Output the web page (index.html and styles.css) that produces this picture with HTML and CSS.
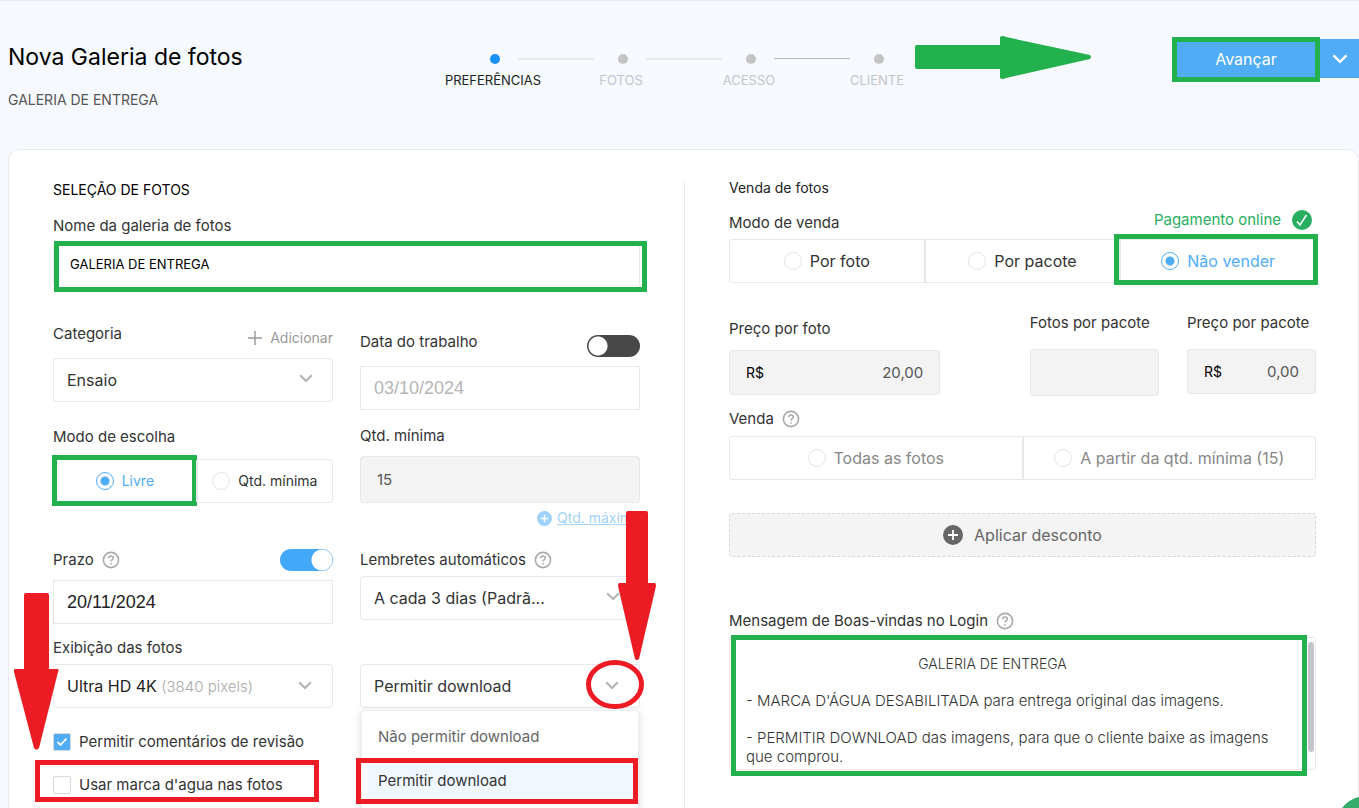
FILE: index.html
```html
<!DOCTYPE html>
<html lang="pt-BR">
<head>
<meta charset="utf-8">
<meta name="viewport" content="width=device-width, initial-scale=1">
<title>Nova Galeria de fotos</title>
<link rel="stylesheet" href="styles.css">
</head>
<body>
<svg class="sprite" aria-hidden="true">
  <symbol id="chevron" viewBox="0 0 14 9"><path d="M1.200 1.200 7 7l5.800-5.800" fill="none" stroke="currentColor" stroke-width="2.200"/></symbol>
  <symbol id="help" viewBox="0 0 18 18"><circle cx="9" cy="9" r="7.600" fill="none" stroke="currentColor" stroke-width="1.600"/><path d="M6.700 7.200c0-1.400 1-2.300 2.300-2.300s2.300.8 2.300 2.100c0 1.600-2.300 1.800-2.300 3.500" fill="none" stroke="currentColor" stroke-width="1.500"/><circle cx="9" cy="12.800" r=".9" fill="currentColor"/></symbol>
  <symbol id="plus-disc" viewBox="0 0 20 20"><circle cx="10" cy="10" r="10" fill="currentColor"/><path d="M10 5v10M5 10h10" stroke="#fff" stroke-width="1.800"/></symbol>
</svg>

<header class="topbar">
  <div class="titles">
    <h1 class="title">Nova Galeria de fotos</h1>
    <p class="subtitle">GALERIA DE ENTREGA</p>
  </div>
  <ol class="steps">
    <li class="step step-active">PREFERÊNCIAS</li>
    <li class="step">FOTOS</li>
    <li class="step step-thin">ACESSO</li>
    <li class="step">CLIENTE</li>
  </ol>
  <div class="actions">
    <svg class="arrow-go" viewBox="0 0 176 43" aria-hidden="true"><path d="M2 9h83V1q2-2 6 0l84 18q2 2 0 4L91 42q-4 2-6 0V33H2q-2 0-2-2V11q0-2 2-2z" fill="#22b14c"/></svg>
    <button class="btn-next mark-go" type="button">Avançar</button>
    <button class="btn-more" type="button" aria-label="Mais opções"><svg class="chevron chevron-lg"><use href="#chevron"/></svg></button>
  </div>
</header>

<main class="panel">
  <section class="selection">
    <h2 class="heading">SELEÇÃO DE FOTOS</h2>
    <label class="label label-name" for="name">Nome da galeria de fotos</label>
    <div class="name-box"><input class="control input-name" id="name" type="text" value="GALERIA DE ENTREGA"></div>

    <div class="columns">
      <div class="column">
        <div class="row row-category">
          <label class="label" for="category">Categoria</label>
          <button class="btn-add" type="button"><svg class="icon-plus" viewBox="0 0 14 14"><path d="M7 0v14M0 7h14" stroke="currentColor" stroke-width="1.400"/></svg>Adicionar</button>
        </div>
        <div class="select-box">
          <select class="control select" id="category"><option>Ensaio</option></select>
          <svg class="chevron"><use href="#chevron"/></svg>
        </div>

        <p class="label label-choice" id="choice">Modo de escolha</p>
        <div class="options options-choice" role="radiogroup" aria-labelledby="choice">
          <label class="option option-on mark-free"><input class="radio" type="radio" name="choice" checked>Livre</label>
          <label class="option"><input class="radio" type="radio" name="choice">Qtd. mínima</label>
        </div>

        <div class="row row-deadline">
          <label class="label" for="deadline">Prazo</label><svg class="help"><use href="#help"/></svg>
          <input class="switch" type="checkbox" role="switch" aria-label="Ativar prazo" checked>
        </div>
        <input class="control date" id="deadline" type="text" value="20/11/2024">

        <div class="display-field">
          <svg class="arrow-down arrow-watermark" viewBox="0 0 45 157" aria-hidden="true"><path d="M12 0h21q2 0 2 2v74h9q1 1 0 3L25 155q-2.500 3-5 0L0 79q-1-2 1-3h9V2q0-2 2-2z" fill="#ed1c24"/></svg>
          <p class="label" id="display">Exibição das fotos</p>
          <button class="control dropdown" type="button" aria-haspopup="listbox" aria-labelledby="display"><span class="strong">Ultra HD 4K</span> <span class="muted">(3840 pixels)</span><svg class="chevron"><use href="#chevron"/></svg></button>
        </div>

        <div class="checks">
          <label class="check"><input class="checkbox" type="checkbox" checked>Permitir comentários de revisão</label>
          <label class="check mark-watermark"><input class="checkbox" type="checkbox">Usar marca d'agua nas fotos</label>
        </div>
      </div>

      <div class="column column-b">
        <div class="row row-date">
          <label class="label" for="date">Data do trabalho</label>
          <input class="switch" type="checkbox" role="switch" aria-label="Ativar data do trabalho">
        </div>
        <input class="control date date-off" id="date" type="text" value="03/10/2024">

        <label class="label label-min" for="min">Qtd. mínima</label>
        <input class="control filled input-min" id="min" type="text" value="15">
        <div class="max"><svg class="icon-max"><use href="#plus-disc"/></svg><a class="link-max" href="#">Qtd. máxima</a></div>

        <div class="row row-reminder"><label class="label" for="reminder">Lembretes automáticos</label><svg class="help"><use href="#help"/></svg></div>
        <div class="select-box">
          <select class="control select" id="reminder"><option>A cada 3 dias (Padrã...</option></select>
          <svg class="chevron"><use href="#chevron"/></svg>
        </div>

        <div class="download">
          <button class="control dropdown" type="button" aria-haspopup="listbox" aria-expanded="true">Permitir download<svg class="chevron"><use href="#chevron"/></svg></button>
          <ul class="menu" role="listbox" aria-label="Download">
            <li class="menu-item" role="option">Não permitir download</li>
            <li class="menu-item menu-item-on" role="option" aria-selected="true">Permitir download</li>
          </ul>
          <svg class="arrow-down arrow-download" viewBox="0 0 38 149" aria-hidden="true"><path d="M10 0h18q2 0 2 2v70h7q1 1 1 3L21 148q-2 2-4 0L0 75q0-2 1-3h7V2q0-2 2-2z" fill="#ed1c24"/></svg>
          <svg class="ring" viewBox="0 0 58 49" aria-hidden="true"><ellipse cx="29" cy="24.500" rx="26.500" ry="22" fill="none" stroke="#ed1c24" stroke-width="5"/></svg>
        </div>
      </div>
    </div>
  </section>

  <section class="sale">
    <h2 class="heading heading-sale">Venda de fotos</h2>
    <div class="row row-mode">
      <p class="label" id="mode">Modo de venda</p>
      <p class="online">Pagamento online<svg class="icon-ok" viewBox="0 0 20 20"><circle cx="10" cy="10" r="10" fill="#27ae60"/><path d="m5 11.500 3 3.500L14.500 5" fill="none" stroke="#fff" stroke-width="1.500"/></svg></p>
    </div>
    <div class="options options-lg" role="radiogroup" aria-labelledby="mode">
      <label class="option"><input class="radio" type="radio" name="mode">Por foto</label>
      <label class="option"><input class="radio" type="radio" name="mode">Por pacote</label>
      <label class="option option-on mark-nosale"><input class="radio" type="radio" name="mode" checked>Não vender</label>
    </div>

    <div class="prices">
      <div class="price price-photo">
        <label class="label" for="price">Preço por foto</label>
        <div class="control filled money"><span class="currency">R$</span><input class="amount" id="price" type="text" value="20,00"></div>
      </div>
      <div class="price">
        <label class="label" for="count">Fotos por pacote</label>
        <input class="control filled" id="count" type="text">
      </div>
      <div class="price">
        <label class="label" for="pack">Preço por pacote</label>
        <div class="control filled money"><span class="currency">R$</span><input class="amount" id="pack" type="text" value="0,00"></div>
      </div>
    </div>

    <div class="row row-sell"><p class="label" id="sell">Venda</p><svg class="help"><use href="#help"/></svg></div>
    <div class="options options-lg options-off" role="radiogroup" aria-labelledby="sell">
      <label class="option"><input class="radio" type="radio" name="sell">Todas as fotos</label>
      <label class="option"><input class="radio" type="radio" name="sell">A partir da qtd. mínima (15)</label>
    </div>

    <button class="btn-discount" type="button"><svg class="icon-disc"><use href="#plus-disc"/></svg>Aplicar desconto</button>

    <div class="row row-message"><p class="label" id="message">Mensagem de Boas-vindas no Login</p><svg class="help"><use href="#help"/></svg></div>
    <div class="message-box">
      <div class="message" role="textbox" aria-multiline="true" aria-labelledby="message" contenteditable="true" spellcheck="false">
        <p class="message-title">GALERIA DE ENTREGA</p>
        <p class="message-line">- MARCA D'ÁGUA DESABILITADA para entrega original das imagens.</p>
        <p class="message-line">- PERMITIR DOWNLOAD das imagens, para que o cliente baixe as imagens que comprou.</p>
      </div>
      <span class="thumb"></span>
    </div>
  </section>
</main>
<button class="chat" type="button" aria-label="Abrir conversa"></button>
</body>
</html>
```
FILE: styles.css
```css
* { box-sizing: border-box; }

body {
  margin: 0;
  height: 100vh;
  overflow: hidden;
  background: #f6f9fe;
  color: #333;
  font: 400 15px/20px Inter, "Open Sans", sans-serif;
}

h1, h2, p, ol, ul { margin: 0; padding: 0; }
ol, ul { list-style: none; }
button, input, select { font: inherit; color: inherit; }
button { cursor: pointer; }
.sprite { position: absolute; width: 0; height: 0; }

/* Top bar */
.topbar {
  display: flex;
  align-items: flex-start;
  height: 149px;
  padding-left: 8px;
  border-top: 1px solid #e9ecf1;
}
.titles { width: 421px; padding-top: 42px; }
.title { color: #000; font-size: 23px; font-weight: 400; line-height: 28px; }
.subtitle { margin-top: 19px; color: #555; font-size: 14px; }

.steps { display: grid; grid-template-columns: repeat(4, 128px); padding-top: 53px; }
.step {
  position: relative;
  color: #c4c6c9;
  font-size: 13px;
  text-align: center;
}
.step::before {
  content: "";
  display: block;
  width: 10px;
  height: 10px;
  margin: 0 0 6px calc(50% - 3px);
  border-radius: 50%;
  background: #c4c4c4;
}
.step:not(:last-child)::after {
  content: "";
  position: absolute;
  top: 4px;
  left: calc(50% + 25px);
  width: 76px;
  height: 2px;
  background: #e8e8e8;
}
.step.step-thin:not(:last-child)::after { height: 1px; background: #b8b8b8; }
.step.step-active { color: #222; }
.step-active::before { background: #1890ff; }

.actions { position: relative; display: flex; height: 39px; margin: 38px 0 0 auto; }
.arrow-go { position: absolute; top: -3px; right: 268px; width: 176px; height: 43px; }
.btn-next, .btn-more { border: 0; padding: 0; background: #50adf5; color: #fff; }
.btn-next { position: relative; width: 148px; font-size: 16px; }
.btn-more { width: 39px; }

.mark-go::after, .name-box::after, .mark-free::after, .mark-nosale::after, .message-box::after {
  content: "";
  position: absolute;
  border: 5px solid #22b14c;
  pointer-events: none;
}
.mark-go::after { inset: -2px 0 -4px; }

/* Panel */
.panel {
  display: grid;
  grid-template-columns: 1fr 1fr;
  gap: 89px;
  position: relative;
  min-height: 700px;
  margin-left: 8px;
  padding: 0 42px 0 44px;
  border: 1px solid #e8eaed;
  border-radius: 12px;
  background: #fff;
}
.panel::before {
  content: "";
  position: absolute;
  top: 32px;
  bottom: 0;
  left: 50%;
  width: 1px;
  background: #e8e8e8;
}
.selection { padding-top: 30px; min-width: 0; }
.sale { padding-top: 28px; min-width: 0; }
.heading { color: #000; font-size: 14px; font-weight: 400; line-height: 20px; }
.heading-sale { color: #222; }
.label { display: block; white-space: nowrap; font-size: 15px; }
.row { display: flex; }

.control {
  display: block;
  width: 100%;
  height: 44px;
  padding: 0 13px;
  border: 1px solid #e8e8e8;
  border-radius: 3px;
  background: #fff;
  outline: 0;
}
.filled { height: 47px; background: #f3f3f3; color: #555; }

.label-name { margin: 16px 0 8px; }
.name-box { position: relative; }
.name-box::after { inset: -3px -7px -4px 1px; }
.input-name { padding: 0 16px 4px; color: #000; font-size: 13px; }

.columns { display: grid; grid-template-columns: 1fr 1fr; gap: 27px; margin-top: 36px; }
.column { min-width: 0; }
.column-b { padding-top: 8px; }

.row-category { justify-content: space-between; margin-bottom: 10px; }
.btn-add {
  display: flex;
  align-items: center;
  gap: 8px;
  height: 24px;
  padding: 4px 0 0;
  border: 0;
  background: none;
  color: #999;
  font-size: 14px;
}
.icon-plus { width: 14px; height: 14px; }

.select-box { position: relative; }
.select { appearance: none; padding-right: 40px; font-size: 16px; }
.dropdown { position: relative; padding-right: 40px; text-align: left; white-space: nowrap; font-size: 16px; }
.strong { color: #222; }
.muted { color: #aaa; font-size: 15px; font-weight: 300; }
.chevron { width: 14px; height: 9px; color: #b5b5b5; }
.select-box .chevron, .dropdown .chevron { position: absolute; top: 16px; right: 20px; pointer-events: none; }
.chevron.chevron-lg { width: 16px; height: 10px; color: #fff; }

.label-choice { margin: 25px 0 12px; }
.options { display: flex; border: 1px solid #e8e8e8; border-radius: 3px; }
.option {
  position: relative;
  display: flex;
  flex: 1;
  align-items: center;
  justify-content: center;
  gap: 8px;
  height: 42px;
  white-space: nowrap;
}
.option + .option { border-left: 2px solid #e8e8e8; }
.option-on { color: #50adf5; }
.options-choice { font-size: 14px; }
.options-choice .option-on { flex: 0 0 51%; }
.options-lg { font-size: 16px; }
.options-off { color: #888; }
.radio {
  appearance: none;
  width: 18px;
  height: 18px;
  margin: 0;
  border: 1px solid #e4e4e4;
  border-radius: 50%;
  background: #fff;
}
.radio:checked { border-color: #50adf5; background: radial-gradient(circle, #50adf5 4px, #fff 5px); }
.mark-free::after { inset: -5px -1px -4px -2px; }
.mark-nosale::after { inset: -6px -3px -3px -7px; }

.help { width: 18px; height: 18px; margin-left: 8px; color: #aaa; }
.switch {
  appearance: none;
  width: 53px;
  height: 22px;
  margin: 0 0 0 auto;
  border-radius: 11px;
  background: radial-gradient(circle at 11px 11px, #fff 9px, #484848 10px);
}
.switch:checked { background: radial-gradient(circle at 42px 11px, #fff 10px, #42a9fa 11px); }
.row-deadline { align-items: center; height: 22px; margin: 46px 0 9px; }
.date { border-radius: 0; color: #222; font: 400 18px/20px "Liberation Sans", Arial, sans-serif; }
.date-off { color: #b5b5b5; }

.display-field { position: relative; margin-top: 14px; }
.display-field .label { margin-bottom: 6px; }
.arrow-down { position: absolute; z-index: 2; pointer-events: none; }
.arrow-watermark { top: -45px; left: -39px; width: 45px; height: 157px; }

.checks { display: grid; gap: 23px; margin-top: 24px; }
.check { position: relative; display: flex; gap: 8px; font-size: 15px; white-space: nowrap; }
.checkbox {
  appearance: none;
  width: 18px;
  height: 18px;
  margin: 1px 0 0;
  border: 1px solid #d9d9d9;
  border-radius: 2px;
  background: #fff;
}
.checkbox:checked {
  background: #50adf5 url("data:image/svg+xml,%3Csvg xmlns='http://www.w3.org/2000/svg' viewBox='0 0 16 16'%3E%3Cpath d='m3.500 8 3 3 6-6.500' fill='none' stroke='white' stroke-width='1.800'/%3E%3C/svg%3E") center / 16px no-repeat;
}
.mark-watermark::after, .menu-item-on::after {
  content: "";
  position: absolute;
  border: 5px solid #ed1c24;
  pointer-events: none;
}
.mark-watermark::after { inset: -15px 14px -7px -18px; }

.row-date { justify-content: space-between; height: 25px; margin-bottom: 9px; }
.row-date .switch { align-self: flex-end; }
.label-min { margin: 16px 0 10px; }
.input-min { padding: 0 16px; }
.max { display: flex; align-items: center; justify-content: flex-end; gap: 5px; margin-top: 5px; color: #9fd2fa; }
.icon-max { width: 15px; height: 15px; }
.link-max { color: inherit; font-size: 14px; }
.row-reminder { align-items: center; margin: 22px 0 6px; }

.download { position: relative; margin-top: 44px; }
.menu {
  position: absolute;
  z-index: 1;
  top: 46px;
  left: 1px;
  right: 1px;
  padding: 4px 5px 12px;
  border: 1px solid #eee;
  border-radius: 3px;
  background: #fff;
  box-shadow: 0 2px 8px rgba(0, 0, 0, .15);
}
.menu-item { position: relative; padding: 12px 11px; color: #666; font-size: 15px; }
.menu-item-on { background: #f0f7ff; color: #333; }
.menu-item-on::after { inset: -1px -5px -1px -11px; }
.arrow-download { top: -153px; right: -16px; width: 38px; height: 149px; }
.ring { position: absolute; z-index: 2; top: -4px; right: -4px; width: 58px; height: 49px; pointer-events: none; }

/* Sale */
.row-mode { justify-content: space-between; margin: 12px 0 6px; }
.row-mode .label { padding-top: 3px; }
.online { display: flex; align-items: center; gap: 11px; height: 23px; padding: 0 4px 3px 0; color: #27ae60; }
.icon-ok { width: 20px; height: 20px; }

.prices { display: flex; gap: 28px; margin-top: 30px; }
.price { display: flex; flex-direction: column; gap: 16px; width: 22%; }
.price-photo { width: 36%; gap: 11px; margin-right: auto; padding-top: 6px; }
.money { display: flex; align-items: center; justify-content: space-between; height: 45px; padding: 0 16px; }
.currency { color: #000; font-size: 14px; }
.amount { width: 70%; padding: 0; border: 0; background: none; text-align: right; outline: 0; }

.row-sell { align-items: center; margin: 13px 0 7px; }
.btn-discount {
  display: flex;
  align-items: center;
  justify-content: center;
  gap: 11px;
  width: 100%;
  height: 44px;
  margin-top: 33px;
  border: 1px dashed #d9d9d9;
  border-radius: 3px;
  background: #f4f4f4;
  color: #666;
  font-size: 16px;
}
.icon-disc { width: 20px; height: 20px; color: #666; }

.row-message { align-items: center; margin: 54px 0 6px; }
.message-box {
  position: relative;
  height: 133px;
  border: 1px solid #e8e8e8;
  border-radius: 3px;
}
.message-box::after { inset: -3px 8px -7px 1px; }
.message { height: 100%; padding: 16px 30px 0 16px; overflow: hidden; outline: 0; color: #333; font-size: 15px; font-weight: 300; line-height: 19px; }
.message-title { padding-right: 46px; font-size: 14px; text-align: center; }
.message-line { margin-top: 18px; }
.thumb { position: absolute; top: 4px; right: 1px; width: 6px; height: 110px; border-radius: 3px; background: #c1c5cc; }

.chat {
  position: fixed;
  right: -37px;
  bottom: -48px;
  width: 60px;
  height: 60px;
  padding: 0;
  border: 0;
  border-radius: 50%;
  background: #35ad68;
}
```
